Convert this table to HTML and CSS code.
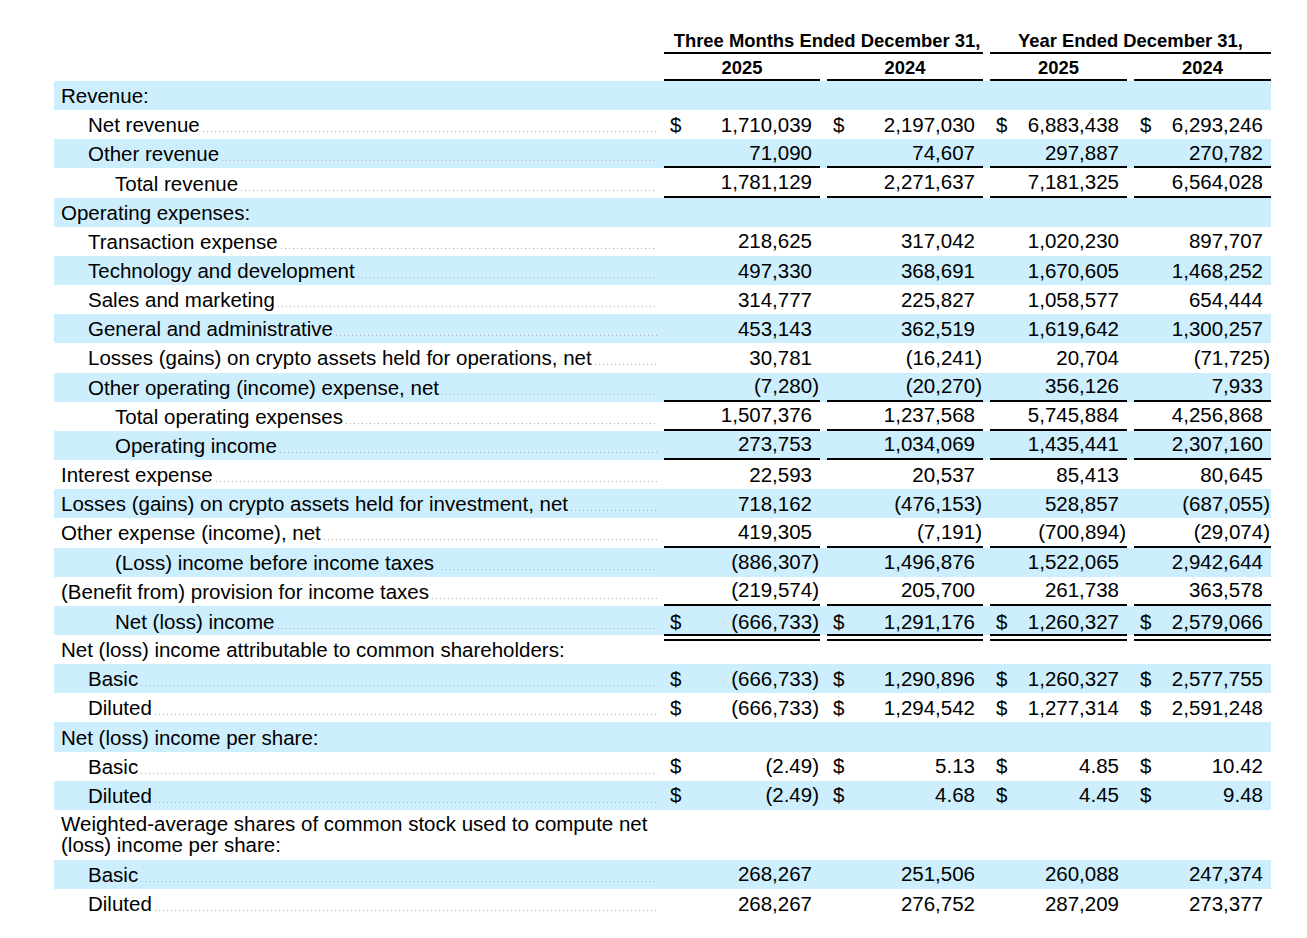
FILE: index.html
```html
<!DOCTYPE html>
<html lang="en">
<head>
<meta charset="utf-8">
<title>Consolidated Statements of Operations</title>
<link rel="stylesheet" href="styles.css">
</head>
<body>
<div class="statement">
  <div class="hdr hdr-groups">
    <div></div>
    <div class="grp grp-q">Three Months Ended December 31,</div>
    <div class="grp">Year Ended December 31,</div>
  </div>
  <div class="hdr hdr-years">
    <div></div>
    <div class="yr">2025</div>
    <div class="yr">2024</div>
    <div class="yr">2025</div>
    <div class="yr">2024</div>
  </div>

  <div class="row band"><div class="lbl l0"><span class="txt">Revenue:</span></div></div>
  <div class="row">
    <div class="lbl l1"><span class="txt">Net revenue</span><span class="dots"></span></div>
    <div class="val"><span class="cur">$</span><span class="amt">1,710,039</span></div>
    <div class="val"><span class="cur">$</span><span class="amt">2,197,030</span></div>
    <div class="val"><span class="cur">$</span><span class="amt">6,883,438</span></div>
    <div class="val"><span class="cur">$</span><span class="amt">6,293,246</span></div>
  </div>
  <div class="row band ul">
    <div class="lbl l1"><span class="txt">Other revenue</span><span class="dots"></span></div>
    <div class="val"><span class="amt">71,090</span></div>
    <div class="val"><span class="amt">74,607</span></div>
    <div class="val"><span class="amt">297,887</span></div>
    <div class="val"><span class="amt">270,782</span></div>
  </div>
  <div class="row ul">
    <div class="lbl l2"><span class="txt">Total revenue</span><span class="dots"></span></div>
    <div class="val"><span class="amt">1,781,129</span></div>
    <div class="val"><span class="amt">2,271,637</span></div>
    <div class="val"><span class="amt">7,181,325</span></div>
    <div class="val"><span class="amt">6,564,028</span></div>
  </div>
  <div class="row band"><div class="lbl l0"><span class="txt">Operating expenses:</span></div></div>
  <div class="row">
    <div class="lbl l1"><span class="txt">Transaction expense</span><span class="dots"></span></div>
    <div class="val"><span class="amt">218,625</span></div>
    <div class="val"><span class="amt">317,042</span></div>
    <div class="val"><span class="amt">1,020,230</span></div>
    <div class="val"><span class="amt">897,707</span></div>
  </div>
  <div class="row band">
    <div class="lbl l1"><span class="txt">Technology and development</span><span class="dots"></span></div>
    <div class="val"><span class="amt">497,330</span></div>
    <div class="val"><span class="amt">368,691</span></div>
    <div class="val"><span class="amt">1,670,605</span></div>
    <div class="val"><span class="amt">1,468,252</span></div>
  </div>
  <div class="row">
    <div class="lbl l1"><span class="txt">Sales and marketing</span><span class="dots"></span></div>
    <div class="val"><span class="amt">314,777</span></div>
    <div class="val"><span class="amt">225,827</span></div>
    <div class="val"><span class="amt">1,058,577</span></div>
    <div class="val"><span class="amt">654,444</span></div>
  </div>
  <div class="row band">
    <div class="lbl l1"><span class="txt">General and administrative</span><span class="dots"></span></div>
    <div class="val"><span class="amt">453,143</span></div>
    <div class="val"><span class="amt">362,519</span></div>
    <div class="val"><span class="amt">1,619,642</span></div>
    <div class="val"><span class="amt">1,300,257</span></div>
  </div>
  <div class="row">
    <div class="lbl l1"><span class="txt">Losses (gains) on crypto assets held for operations, net</span><span class="dots"></span></div>
    <div class="val"><span class="amt">30,781</span></div>
    <div class="val"><span class="amt neg">(16,241)</span></div>
    <div class="val"><span class="amt">20,704</span></div>
    <div class="val"><span class="amt neg">(71,725)</span></div>
  </div>
  <div class="row band ul">
    <div class="lbl l1"><span class="txt">Other operating (income) expense, net</span><span class="dots"></span></div>
    <div class="val"><span class="amt neg">(7,280)</span></div>
    <div class="val"><span class="amt neg">(20,270)</span></div>
    <div class="val"><span class="amt">356,126</span></div>
    <div class="val"><span class="amt">7,933</span></div>
  </div>
  <div class="row ul">
    <div class="lbl l2"><span class="txt">Total operating expenses</span><span class="dots"></span></div>
    <div class="val"><span class="amt">1,507,376</span></div>
    <div class="val"><span class="amt">1,237,568</span></div>
    <div class="val"><span class="amt">5,745,884</span></div>
    <div class="val"><span class="amt">4,256,868</span></div>
  </div>
  <div class="row band ul">
    <div class="lbl l2"><span class="txt">Operating income</span><span class="dots"></span></div>
    <div class="val"><span class="amt">273,753</span></div>
    <div class="val"><span class="amt">1,034,069</span></div>
    <div class="val"><span class="amt">1,435,441</span></div>
    <div class="val"><span class="amt">2,307,160</span></div>
  </div>
  <div class="row">
    <div class="lbl l0"><span class="txt">Interest expense</span><span class="dots"></span></div>
    <div class="val"><span class="amt">22,593</span></div>
    <div class="val"><span class="amt">20,537</span></div>
    <div class="val"><span class="amt">85,413</span></div>
    <div class="val"><span class="amt">80,645</span></div>
  </div>
  <div class="row band">
    <div class="lbl l0"><span class="txt">Losses (gains) on crypto assets held for investment, net</span><span class="dots"></span></div>
    <div class="val"><span class="amt">718,162</span></div>
    <div class="val"><span class="amt neg">(476,153)</span></div>
    <div class="val"><span class="amt">528,857</span></div>
    <div class="val"><span class="amt neg">(687,055)</span></div>
  </div>
  <div class="row ul">
    <div class="lbl l0"><span class="txt">Other expense (income), net</span><span class="dots"></span></div>
    <div class="val"><span class="amt">419,305</span></div>
    <div class="val"><span class="amt neg">(7,191)</span></div>
    <div class="val"><span class="amt neg">(700,894)</span></div>
    <div class="val"><span class="amt neg">(29,074)</span></div>
  </div>
  <div class="row band">
    <div class="lbl l2"><span class="txt">(Loss) income before income taxes</span><span class="dots"></span></div>
    <div class="val"><span class="amt neg">(886,307)</span></div>
    <div class="val"><span class="amt">1,496,876</span></div>
    <div class="val"><span class="amt">1,522,065</span></div>
    <div class="val"><span class="amt">2,942,644</span></div>
  </div>
  <div class="row ul">
    <div class="lbl l0"><span class="txt">(Benefit from) provision for income taxes</span><span class="dots"></span></div>
    <div class="val"><span class="amt neg">(219,574)</span></div>
    <div class="val"><span class="amt">205,700</span></div>
    <div class="val"><span class="amt">261,738</span></div>
    <div class="val"><span class="amt">363,578</span></div>
  </div>
  <div class="row band dbl">
    <div class="lbl l2"><span class="txt">Net (loss) income</span><span class="dots"></span></div>
    <div class="val"><span class="cur">$</span><span class="amt neg">(666,733)</span></div>
    <div class="val"><span class="cur">$</span><span class="amt">1,291,176</span></div>
    <div class="val"><span class="cur">$</span><span class="amt">1,260,327</span></div>
    <div class="val"><span class="cur">$</span><span class="amt">2,579,066</span></div>
  </div>
  <div class="row"><div class="lbl l0"><span class="txt">Net (loss) income attributable to common shareholders:</span></div></div>
  <div class="row band">
    <div class="lbl l1"><span class="txt">Basic</span><span class="dots"></span></div>
    <div class="val"><span class="cur">$</span><span class="amt neg">(666,733)</span></div>
    <div class="val"><span class="cur">$</span><span class="amt">1,290,896</span></div>
    <div class="val"><span class="cur">$</span><span class="amt">1,260,327</span></div>
    <div class="val"><span class="cur">$</span><span class="amt">2,577,755</span></div>
  </div>
  <div class="row">
    <div class="lbl l1"><span class="txt">Diluted</span><span class="dots"></span></div>
    <div class="val"><span class="cur">$</span><span class="amt neg">(666,733)</span></div>
    <div class="val"><span class="cur">$</span><span class="amt">1,294,542</span></div>
    <div class="val"><span class="cur">$</span><span class="amt">1,277,314</span></div>
    <div class="val"><span class="cur">$</span><span class="amt">2,591,248</span></div>
  </div>
  <div class="row band"><div class="lbl l0"><span class="txt">Net (loss) income per share:</span></div></div>
  <div class="row">
    <div class="lbl l1"><span class="txt">Basic</span><span class="dots"></span></div>
    <div class="val"><span class="cur">$</span><span class="amt neg">(2.49)</span></div>
    <div class="val"><span class="cur">$</span><span class="amt">5.13</span></div>
    <div class="val"><span class="cur">$</span><span class="amt">4.85</span></div>
    <div class="val"><span class="cur">$</span><span class="amt">10.42</span></div>
  </div>
  <div class="row band">
    <div class="lbl l1"><span class="txt">Diluted</span><span class="dots"></span></div>
    <div class="val"><span class="cur">$</span><span class="amt neg">(2.49)</span></div>
    <div class="val"><span class="cur">$</span><span class="amt">4.68</span></div>
    <div class="val"><span class="cur">$</span><span class="amt">4.45</span></div>
    <div class="val"><span class="cur">$</span><span class="amt">9.48</span></div>
  </div>
  <div class="row tall"><div class="lbl l0 wrap"><span class="txt">Weighted-average shares of common stock used to compute net<br>(loss) income per share:</span></div></div>
  <div class="row band">
    <div class="lbl l1"><span class="txt">Basic</span><span class="dots"></span></div>
    <div class="val"><span class="amt">268,267</span></div>
    <div class="val"><span class="amt">251,506</span></div>
    <div class="val"><span class="amt">260,088</span></div>
    <div class="val"><span class="amt">247,374</span></div>
  </div>
  <div class="row">
    <div class="lbl l1"><span class="txt">Diluted</span><span class="dots"></span></div>
    <div class="val"><span class="amt">268,267</span></div>
    <div class="val"><span class="amt">276,752</span></div>
    <div class="val"><span class="amt">287,209</span></div>
    <div class="val"><span class="amt">273,377</span></div>
  </div>
</div>
</body>
</html>
```

FILE: styles.css
```css
* {
  box-sizing: border-box;
}

html, body {
  margin: 0;
  padding: 0;
  background: #ffffff;
}

body {
  font-family: "Liberation Sans", Arial, sans-serif;
  font-size: 20.5px;
  color: #000000;
}

.statement {
  width: 1217px;
  margin: 0 0 0 54px;
  padding-top: 28px;
}

.hdr,
.row {
  display: grid;
  grid-template-columns: 603px 156px 156px 137px 137px;
  column-gap: 7px;
}

.hdr {
  font-size: 18.4px;
  font-weight: bold;
}

.hdr-groups {
  height: 26px;
}

.grp {
  grid-column: span 2;
  text-align: center;
  border-bottom: 2px solid #000;
  padding-top: 2px;
  line-height: 22px;
}

.grp.grp-q {
  padding-left: 7px;
}

.hdr-years {
  height: 27px;
}

.yr {
  text-align: center;
  border-bottom: 2px solid #000;
  padding-top: 2px;
  line-height: 23px;
}

.row {
  height: 29.16px;
  align-items: center;
}

.row.band {
  background: #cdeefc;
}

.row.tall {
  height: 50px;
}

.lbl {
  display: flex;
  align-items: baseline;
  padding-left: 7px;
  white-space: nowrap;
  line-height: 23px;
}

.lbl.wrap {
  white-space: normal;
  line-height: 20.5px;
}

.lbl.l1 {
  padding-left: 34px;
}

.lbl.l2 {
  padding-left: 61px;
}

.dots {
  flex: 1;
  height: 2px;
  margin-left: 3px;
  background-image: linear-gradient(to right, #b0b0b0 1px, transparent 1px);
  background-size: 4px 1px;
  background-repeat: repeat-x;
  background-position: left bottom;
}

.val {
  align-self: stretch;
  display: flex;
  align-items: center;
  justify-content: space-between;
  padding: 0 8px 0 6px;
  white-space: nowrap;
}

.amt {
  margin-left: auto;
}

.amt.neg {
  margin-right: -7px;
}

.row.ul .val {
  border-bottom: 2px solid #000;
}

.row.dbl .val {
  border-bottom: 7px double #000;
  margin-bottom: -4px;
  padding-top: 4px;
}
```
